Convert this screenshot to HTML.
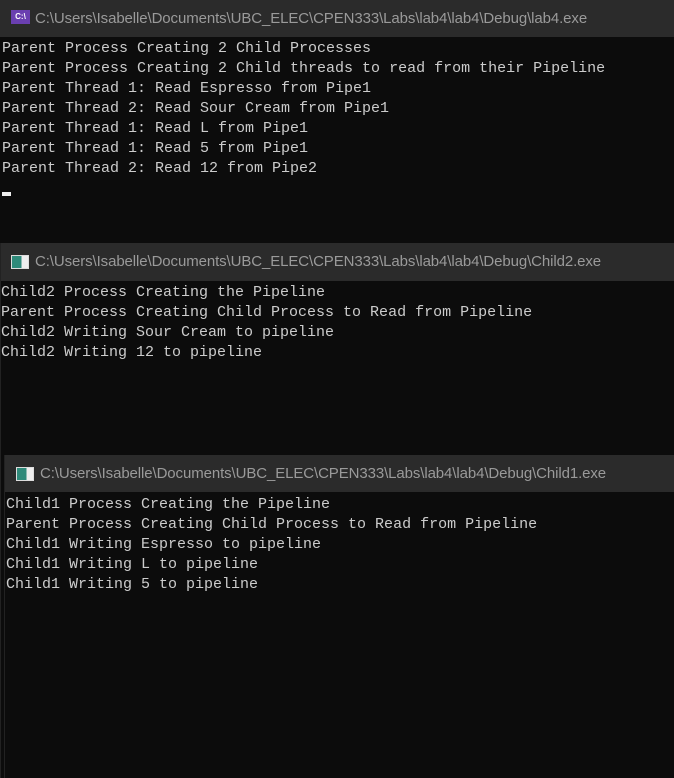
<!DOCTYPE html>
<html><head><style>
body{margin:0;width:674px;height:778px;background:#0c0c0c;position:relative;overflow:hidden}
.bar{position:absolute;height:38px;background:#2b2b2b;right:0}
.t{position:absolute;top:10px;left:35px;font:15px "Liberation Sans",sans-serif;color:#9a9a9a;white-space:nowrap;letter-spacing:-0.1px}
.ico{position:absolute;top:12px;left:11px;width:18px;height:14px}
pre{position:absolute;margin:0;font:15px/20px "Liberation Mono",monospace;color:#cccccc}
</style></head><body>
<div class="bar" style="left:0;top:0;height:37px"><div class="ico" style="background:#6a3fb0;left:11px;top:10px;width:19px;height:14px;color:#fff;font:bold 8px 'Liberation Sans';text-align:center;line-height:14px">C:\</div><div class="t">C:\Users\Isabelle\Documents\UBC_ELEC\CPEN333\Labs\lab4\lab4\Debug\lab4.exe</div></div>
<pre style="left:2px;top:39px">Parent Process Creating 2 Child Processes
Parent Process Creating 2 Child threads to read from their Pipeline
Parent Thread 1: Read Espresso from Pipe1
Parent Thread 2: Read Sour Cream from Pipe1
Parent Thread 1: Read L from Pipe1
Parent Thread 1: Read 5 from Pipe1
Parent Thread 2: Read 12 from Pipe2</pre>
<div style="position:absolute;left:2px;top:192px;width:9px;height:4px;background:#eee"></div>
<div style="position:absolute;left:0;top:243px;width:1px;height:535px;background:#222"></div>
<div class="bar" style="left:1px;top:243px"><div class="ico" style="left:10px;top:12px;width:18px;height:14px;background:linear-gradient(90deg,#2f8a7a 0 60%,#eee 60%);border:1px solid #ddd;box-sizing:border-box"></div><div class="t" style="left:34px">C:\Users\Isabelle\Documents\UBC_ELEC\CPEN333\Labs\lab4\lab4\Debug\Child2.exe</div></div>
<pre style="left:1px;top:283px">Child2 Process Creating the Pipeline
Parent Process Creating Child Process to Read from Pipeline
Child2 Writing Sour Cream to pipeline
Child2 Writing 12 to pipeline</pre>
<div style="position:absolute;left:4px;top:455px;width:1px;height:323px;background:#222"></div>
<div class="bar" style="left:5px;top:455px;height:37px"><div class="ico" style="left:11px;top:12px;width:18px;height:14px;background:linear-gradient(90deg,#2f8a7a 0 60%,#eee 60%);border:1px solid #ddd;box-sizing:border-box"></div><div class="t">C:\Users\Isabelle\Documents\UBC_ELEC\CPEN333\Labs\lab4\lab4\Debug\Child1.exe</div></div>
<pre style="left:6px;top:495px">Child1 Process Creating the Pipeline
Parent Process Creating Child Process to Read from Pipeline
Child1 Writing Espresso to pipeline
Child1 Writing L to pipeline
Child1 Writing 5 to pipeline</pre>
</body></html>
